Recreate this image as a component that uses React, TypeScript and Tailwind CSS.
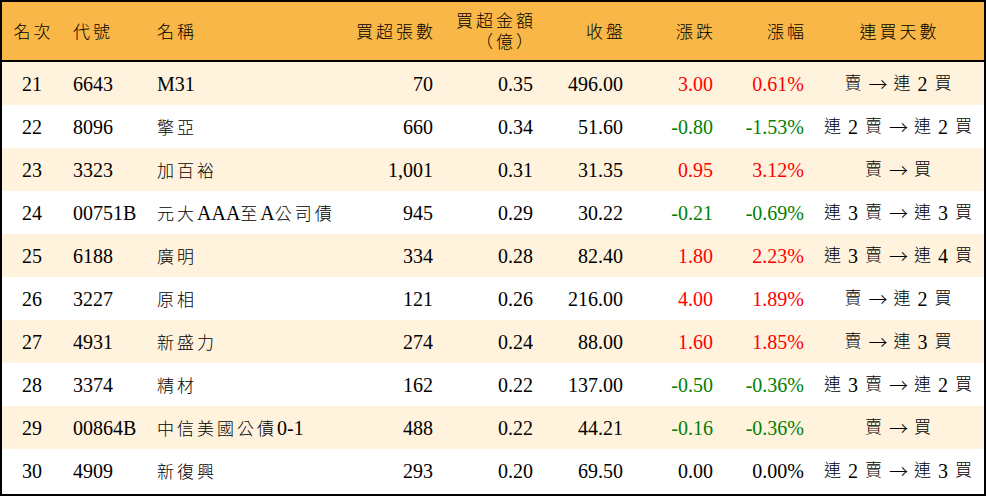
import React from "react";

type Row = {
  rank: string;
  code: string;
  name: string;
  qty: string;
  amt: string;
  close: string;
  chg: string;
  pct: string;
  days: string;
  dir: "up" | "down" | "flat";
};

const rows: Row[] = [
  { rank: "21", code: "6643", name: "M31", qty: "70", amt: "0.35", close: "496.00", chg: "3.00", pct: "0.61%", days: "賣 → 連 2 買", dir: "up" },
  { rank: "22", code: "8096", name: "擎亞", qty: "660", amt: "0.34", close: "51.60", chg: "-0.80", pct: "-1.53%", days: "連 2 賣 → 連 2 買", dir: "down" },
  { rank: "23", code: "3323", name: "加百裕", qty: "1,001", amt: "0.31", close: "31.35", chg: "0.95", pct: "3.12%", days: "賣 → 買", dir: "up" },
  { rank: "24", code: "00751B", name: "元大AAA至A公司債", qty: "945", amt: "0.29", close: "30.22", chg: "-0.21", pct: "-0.69%", days: "連 3 賣 → 連 3 買", dir: "down" },
  { rank: "25", code: "6188", name: "廣明", qty: "334", amt: "0.28", close: "82.40", chg: "1.80", pct: "2.23%", days: "連 3 賣 → 連 4 買", dir: "up" },
  { rank: "26", code: "3227", name: "原相", qty: "121", amt: "0.26", close: "216.00", chg: "4.00", pct: "1.89%", days: "賣 → 連 2 買", dir: "up" },
  { rank: "27", code: "4931", name: "新盛力", qty: "274", amt: "0.24", close: "88.00", chg: "1.60", pct: "1.85%", days: "賣 → 連 3 買", dir: "up" },
  { rank: "28", code: "3374", name: "精材", qty: "162", amt: "0.22", close: "137.00", chg: "-0.50", pct: "-0.36%", days: "連 3 賣 → 連 2 買", dir: "down" },
  { rank: "29", code: "00864B", name: "中信美國公債0-1", qty: "488", amt: "0.22", close: "44.21", chg: "-0.16", pct: "-0.36%", days: "賣 → 買", dir: "down" },
  { rank: "30", code: "4909", name: "新復興", qty: "293", amt: "0.20", close: "69.50", chg: "0.00", pct: "0.00%", days: "連 2 賣 → 連 3 買", dir: "flat" },
];

const CJK = /[\u3000-\u9fff\uff00-\uffef]/;

function T({ text }: { text: string }) {
  const runs: { s: string; cjk: boolean }[] = [];
  for (const ch of text) {
    const c = CJK.test(ch);
    const last = runs[runs.length - 1];
    if (last && last.cjk === c) last.s += ch;
    else runs.push({ s: ch, cjk: c });
  }
  return (
    <>
      {runs.map((r, i) =>
        r.cjk ? (
          <span
            key={i}
            className={
              "text-[17px] font-light tracking-[3px] " +
              (i === runs.length - 1 ? "-mr-[3px]" : "")
            }
          >
            {r.s}
          </span>
        ) : (
          <span key={i}>{r.s}</span>
        )
      )}
    </>
  );
}

function Days({ text }: { text: string }) {
  const tokens = text.split(" ");
  return (
    <div className="flex items-center justify-center gap-[7px] whitespace-nowrap">
      {tokens.map((t, i) =>
        t === "→" ? (
          <span
            key={i}
            className="inline-block w-[18px] text-[19px] font-light text-center"
            style={{ fontFamily: '"Noto Sans CJK TC", sans-serif' }}
          >
            →
          </span>
        ) : CJK.test(t) ? (
          <span key={i} className="text-[17px] font-light">
            {t}
          </span>
        ) : (
          <span key={i}>{t}</span>
        )
      )}
    </div>
  );
}

const grid =
  "grid grid-cols-[60px_84px_197px_100px_100px_90px_90px_91px_168px] items-center";

export default function App() {
  return (
    <div
      className="w-[986px] h-[496px] border-2 border-black bg-white text-black text-[20px] leading-none"
      style={{ fontFamily: '"Liberation Serif", "Noto Sans CJK TC", serif' }}
    >
      <div className={grid + " h-[60px] bg-[#f9b747] border-b-2 border-black"}>
        <div className="text-center"><T text="名次" /></div>
        <div className="pl-[11px]"><T text="代號" /></div>
        <div className="pl-[11px]"><T text="名稱" /></div>
        <div className="text-right pr-[10px]"><T text="買超張數" /></div>
        <div className="pr-[10px] flex flex-col items-end gap-[3px] leading-[17px] whitespace-nowrap">
          <div><T text="買超金額" /></div>
          <div><T text="（億）" /></div>
        </div>
        <div className="text-right pr-[10px]"><T text="收盤" /></div>
        <div className="text-right pr-[10px]"><T text="漲跌" /></div>
        <div className="text-right pr-[10px]"><T text="漲幅" /></div>
        <div className="text-center"><T text="連買天數" /></div>
      </div>
      {rows.map((r, i) => {
        const color =
          r.dir === "up" ? "text-[#ff0000]" : r.dir === "down" ? "text-[#008000]" : "text-black";
        return (
          <div
            key={r.rank}
            className={grid + " h-[43px] " + (i % 2 === 0 ? "bg-[#fff3de]" : "bg-white")}
          >
            <div className="text-center">{r.rank}</div>
            <div className="pl-[11px]">{r.code}</div>
            <div className="pl-[11px] whitespace-nowrap"><T text={r.name} /></div>
            <div className="text-right pr-[10px]">{r.qty}</div>
            <div className="text-right pr-[10px]">{r.amt}</div>
            <div className="text-right pr-[10px]">{r.close}</div>
            <div className={"text-right pr-[10px] " + color}>{r.chg}</div>
            <div className={"text-right pr-[10px] " + color}>{r.pct}</div>
            <Days text={r.days} />
          </div>
        );
      })}
    </div>
  );
}
